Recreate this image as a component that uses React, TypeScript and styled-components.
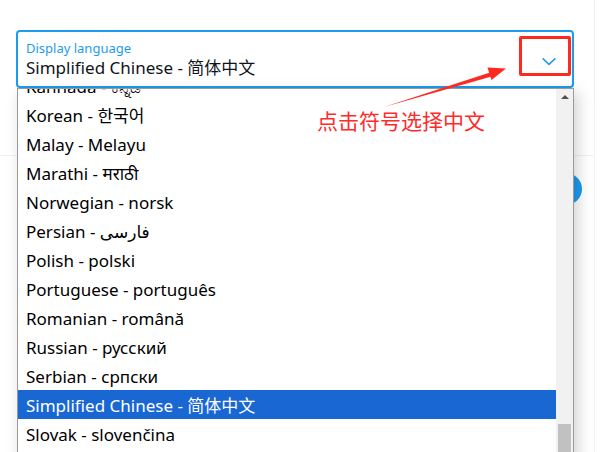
import React from "react";
import styled, { createGlobalStyle } from "styled-components";

const GlobalStyle = createGlobalStyle`
  html, body {
    margin: 0;
    padding: 0;
    background: #ffffff;
  }
  body {
    font-family: "Noto Sans", "DejaVu Sans", "Noto Sans CJK SC", sans-serif;
  }
`;

const Page = styled.div`
  position: relative;
  width: 616px;
  height: 452px;
  overflow: hidden;
  background: #ffffff;
`;

const MainColumn = styled.div`
  width: 595px;
  height: 100%;
  box-sizing: border-box;
  border-right: 1px solid #eff3f4;
  display: flex;
  flex-direction: column;
`;

const FieldWrap = styled.div`
  padding: 30px 20px 0 16px;
`;

const Field = styled.div`
  height: 58px;
  box-sizing: border-box;
  border: 2px solid #1d9bf0;
  border-radius: 4px;
  display: flex;
  align-items: center;
  padding: 0 14px 0 8px;
`;

const FieldText = styled.div`
  flex: 1;
  display: flex;
  flex-direction: column;
  gap: 1px;
`;

const FieldLabel = styled.span`
  font-size: 13px;
  line-height: 16px;
  color: #1d9bf0;
`;

const FieldValue = styled.span`
  font-size: 17px;
  line-height: 22px;
  color: #0f1419;
`;

const Chevron = styled.svg`
  width: 18px;
  height: 18px;
  margin-top: 4px;
`;

const Divider = styled.div`
  margin-top: 67px;
  height: 1px;
  background: #eff3f4;
`;

const ButtonRow = styled.div`
  display: flex;
  justify-content: flex-end;
  padding: 17px 12px 0 0;
`;

const RoundButton = styled.div`
  width: 32px;
  height: 32px;
  border-radius: 50%;
  background: #1d9bf0;
`;

const Dropdown = styled.div`
  position: absolute;
  left: 17px;
  top: 88px;
  width: 557px;
  height: 380px;
  box-sizing: border-box;
  border: 1px solid #9a9a9a;
  background: #ffffff;
  box-shadow: 4px 4px 14px rgba(0, 0, 0, 0.18);
  display: flex;
  overflow: hidden;
`;

const OptionList = styled.div`
  flex: 1;
  margin-top: -18px;
  display: flex;
  flex-direction: column;
`;

const Option = styled.div<{ $selected?: boolean }>`
  height: 29px;
  flex: none;
  padding-left: 8px;
  font-size: 17px;
  line-height: 31px;
  white-space: nowrap;
  overflow: hidden;
  color: ${(p) => (p.$selected ? "#ffffff" : "#000000")};
  background: ${(p) => (p.$selected ? "#1967d2" : "transparent")};
`;

const Scrollbar = styled.div`
  width: 17px;
  flex: none;
  background: #f1f1f1;
  display: flex;
  flex-direction: column;
  align-items: center;
`;

const ScrollArrow = styled.div`
  margin-top: 6px;
  width: 0;
  height: 0;
  border-left: 4px solid transparent;
  border-right: 4px solid transparent;
  border-bottom: 4px solid #505050;
`;

const ScrollThumb = styled.div`
  margin-top: 325px;
  width: 13px;
  height: 40px;
  background: #c1c1c1;
`;

const RedBox = styled.div`
  position: absolute;
  left: 519px;
  top: 36px;
  width: 52px;
  height: 40px;
  box-sizing: border-box;
  border: 3px solid #ff2a1f;
  border-radius: 2px;
`;

const Note = styled.div`
  position: absolute;
  left: 317px;
  top: 106px;
  font-family: "Noto Sans CJK SC", sans-serif;
  font-size: 21px;
  line-height: 28px;
  color: #ff2a2a;
`;

const Arrow = styled.svg`
  position: absolute;
  left: 0;
  top: 0;
  width: 616px;
  height: 452px;
  pointer-events: none;
`;

const options = [
  "Kannada - ಕನ್ನಡ",
  "Korean - 한국어",
  "Malay - Melayu",
  "Marathi - मराठी",
  "Norwegian - norsk",
  "Persian - فارسی",
  "Polish - polski",
  "Portuguese - português",
  "Romanian - română",
  "Russian - русский",
  "Serbian - српски",
  "Simplified Chinese - 简体中文",
  "Slovak - slovenčina",
];

const selected = "Simplified Chinese - 简体中文";

const App = () => {
  return (
    <Page>
      <GlobalStyle />
      <MainColumn>
        <FieldWrap>
          <Field>
            <FieldText>
              <FieldLabel>Display language</FieldLabel>
              <FieldValue>{selected}</FieldValue>
            </FieldText>
            <Chevron viewBox="0 0 24 24">
              <path
                d="M3.5 8.5 L12 16.5 L20.5 8.5"
                fill="none"
                stroke="#1d9bf0"
                strokeWidth="2"
              />
            </Chevron>
          </Field>
        </FieldWrap>
        <Divider />
        <ButtonRow>
          <RoundButton />
        </ButtonRow>
      </MainColumn>

      <Dropdown>
        <OptionList>
          {options.map((o) => (
            <Option key={o} $selected={o === selected}>
              {o}
            </Option>
          ))}
        </OptionList>
        <Scrollbar>
          <ScrollArrow />
          <ScrollThumb />
        </Scrollbar>
      </Dropdown>

      <RedBox />
      <Arrow viewBox="0 0 616 452">
        <polygon points="384,107 490,72.5 491.5,76.5" fill="#ff2a1f" />
        <polygon points="506,68.5 487.5,67.5 491.5,80" fill="#ff2a1f" />
      </Arrow>
      <Note>点击符号选择中文</Note>
    </Page>
  );
};

export default App;
